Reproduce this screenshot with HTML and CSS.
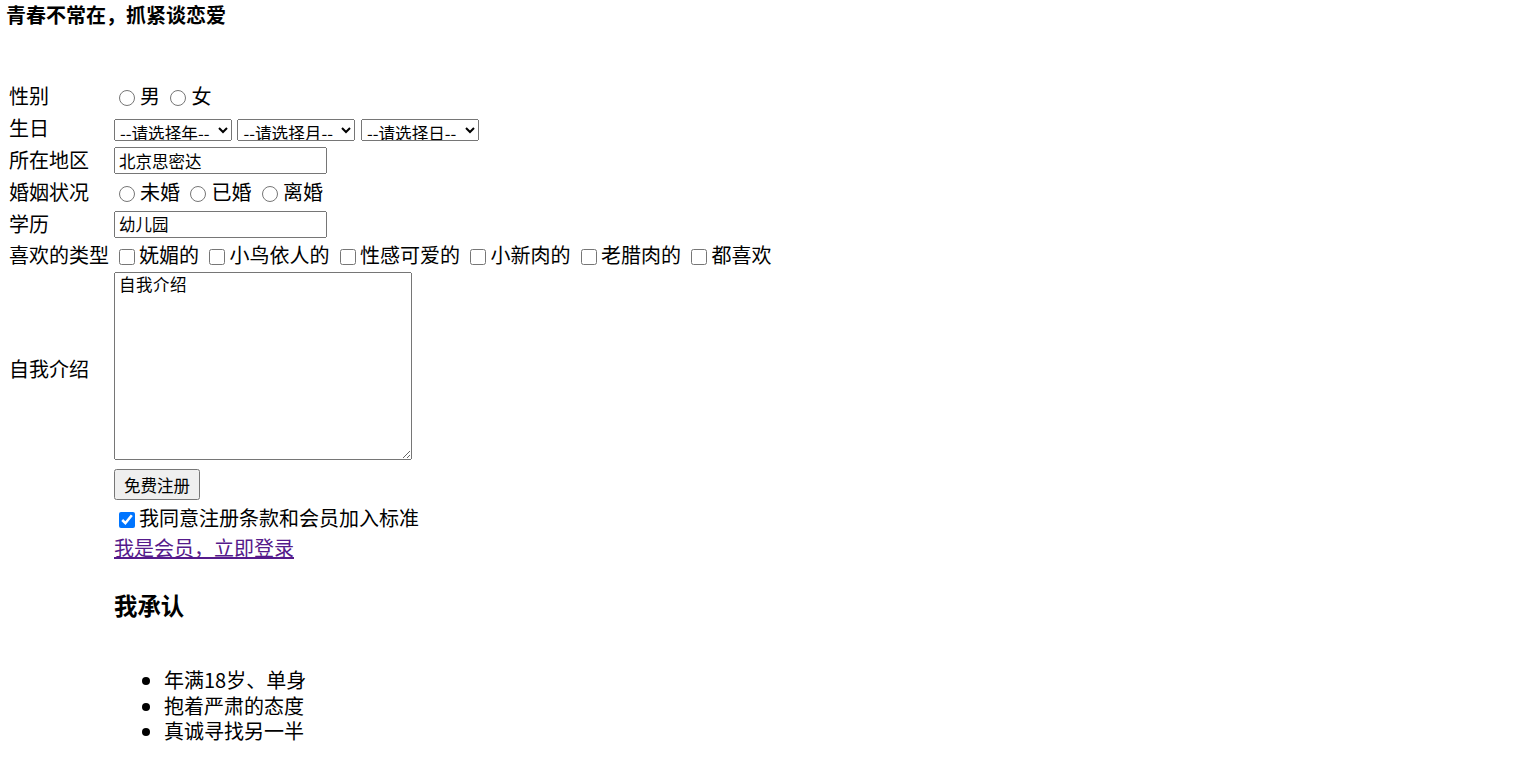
FILE: index.html
```html
<!DOCTYPE html>
<html lang="zh-CN">
<head>
  <meta charset="UTF-8">
  <meta name="viewport" content="width=device-width, initial-scale=1.0">
  <title>青春不常在，抓紧谈恋爱</title>
  <link rel="stylesheet" href="styles.css">
</head>
<body>
  <h4 class="title">青春不常在，抓紧谈恋爱</h4>

  <table class="form">
    <tr class="row">
      <td class="label">性别</td>
      <td class="field">
        <input type="radio" name="sex" id="male"><label for="male">男</label>
        <input type="radio" name="sex" id="female"><label for="female">女</label>
      </td>
    </tr>
    <tr class="row">
      <td class="label">生日</td>
      <td class="field">
        <select class="pick">
          <option>--请选择年--</option>
          <option>2001</option>
          <option>2002</option>
        </select>
        <select class="pick">
          <option>--请选择月--</option>
          <option>1</option>
          <option>2</option>
        </select>
        <select class="pick">
          <option>--请选择日--</option>
          <option>1</option>
          <option>2</option>
        </select>
      </td>
    </tr>
    <tr class="row">
      <td class="label">所在地区</td>
      <td class="field"><input type="text" class="text-input" value="北京思密达"></td>
    </tr>
    <tr class="row">
      <td class="label">婚姻状况</td>
      <td class="field">
        <input type="radio" name="marry" id="single"><label for="single">未婚</label>
        <input type="radio" name="marry" id="married"><label for="married">已婚</label>
        <input type="radio" name="marry" id="divorced"><label for="divorced">离婚</label>
      </td>
    </tr>
    <tr class="row">
      <td class="label">学历</td>
      <td class="field"><input type="text" class="text-input" value="幼儿园"></td>
    </tr>
    <tr class="row">
      <td class="label">喜欢的类型</td>
      <td class="field">
        <input type="checkbox" class="check"><span>妩媚的</span>
        <input type="checkbox" class="check"><span>小鸟依人的</span>
        <input type="checkbox" class="check"><span>性感可爱的</span>
        <input type="checkbox" class="check"><span>小新肉的</span>
        <input type="checkbox" class="check"><span>老腊肉的</span>
        <input type="checkbox" class="check"><span>都喜欢</span>
      </td>
    </tr>
    <tr class="row-intro">
      <td class="label">自我介绍</td>
      <td class="field"><textarea class="intro">自我介绍</textarea></td>
    </tr>
    <tr class="row-button">
      <td></td>
      <td class="field"><button type="button" class="register">免费注册</button></td>
    </tr>
    <tr class="row-agree">
      <td></td>
      <td class="field"><input type="checkbox" class="check" checked><span>我同意注册条款和会员加入标准</span></td>
    </tr>
    <tr class="row-link">
      <td></td>
      <td class="field"><a href="#" class="login">我是会员，立即登录</a></td>
    </tr>
    <tr>
      <td></td>
      <td class="field">
        <h3 class="promise">我承认</h3>
        <ul class="rules">
          <li>年满18岁、单身</li>
          <li>抱着严肃的态度</li>
          <li>真诚寻找另一半</li>
        </ul>
      </td>
    </tr>
  </table>
</body>
</html>
```

FILE: styles.css
```css
body {
  margin: 3px 6px;
  font-family: "Noto Sans CJK SC", sans-serif;
  font-size: 20px;
  color: #000;
}

.title {
  font-size: 20px;
  line-height: 24px;
  font-weight: bold;
  margin: 0 0 53px;
}

.form {
  border-collapse: separate;
  border-spacing: 0;
  margin-left: 3px;
}

.form td {
  padding: 0;
  line-height: 25px;
  vertical-align: middle;
}

.label {
  width: 105px;
  white-space: nowrap;
}

.field {
  white-space: nowrap;
  word-spacing: 1px;
}

.row td {
  height: 31.8px;
}

.row-intro td {
  height: 195px;
}

.row-button td {
  height: 37.4px;
}

.row-agree td {
  height: 28px;
}

.row-link td {
  height: 32px;
}

input[type="radio"] {
  width: 16px;
  height: 16px;
  margin: 0 5px;
  vertical-align: -2px;
}

.check {
  width: 16px;
  height: 16px;
  margin: 0 4px 0 5px;
  vertical-align: -2px;
}

.pick {
  width: 118px;
  height: 22px;
  padding: 0 1px;
  font-family: "Noto Sans CJK SC", sans-serif;
  font-size: 16.6px;
  line-height: 20px;
  vertical-align: middle;
}

.text-input {
  width: 213px;
  height: 27px;
  box-sizing: border-box;
  font-family: "Noto Sans CJK SC", sans-serif;
  font-size: 16.5px;
  padding: 0 3px;
  vertical-align: middle;
}

.intro {
  display: block;
  width: 298px;
  height: 188px;
  box-sizing: border-box;
  margin: 1px 0 6px;
  padding: 1px 4px;
  font-family: "Noto Sans CJK SC", sans-serif;
  font-size: 16.5px;
  line-height: 20px;
  letter-spacing: 0.5px;
}

.register {
  width: 86px;
  height: 31px;
  padding: 0;
  font-family: "Noto Sans CJK SC", sans-serif;
  font-size: 16.5px;
  vertical-align: middle;
}

.login {
  color: #551a8b;
}

.promise {
  font-size: 23.4px;
  line-height: 30px;
  margin: 27px 0 47px;
}

.rules {
  margin: 0;
  padding-left: 50px;
}

.rules li {
  line-height: 25.5px;
}
```
